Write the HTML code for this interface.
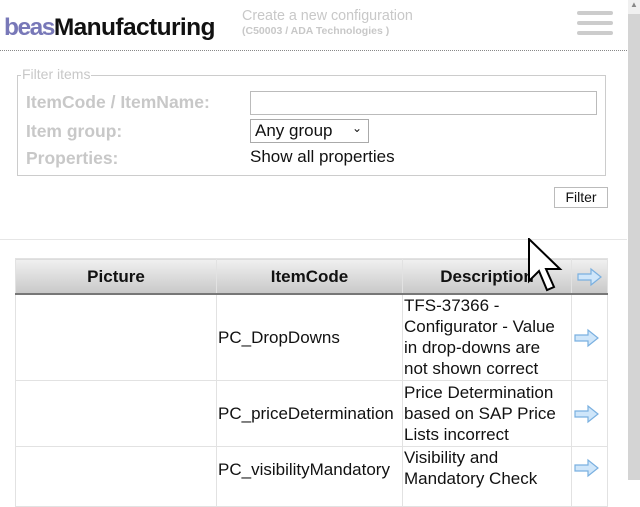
<!DOCTYPE html>
<html><head><style>
body{margin:0;width:640px;height:480px;overflow:hidden;background:#fff;font-family:"Liberation Sans",sans-serif;position:relative}
.a{position:absolute}
.lbl{color:#c8c8c8;font-weight:bold;font-size:17.5px}
table{position:absolute;left:15px;top:258px;border-collapse:collapse;font-size:17px;color:#111;table-layout:fixed;width:592px}
td,th{border:1px solid #e2e2e2;padding:0 1px;line-height:21px;white-space:nowrap;overflow:hidden}
th{height:34px;background:linear-gradient(#f0f0f0,#c8c8c8);border-bottom:2px solid #777;font-weight:bold}
svg{vertical-align:middle}
</style></head><body>
<div class="a" style="left:4px;top:14px;font-size:24.5px;font-weight:bold;letter-spacing:-1.5px"><span style="color:#7878b8">beas</span><span style="color:#111;letter-spacing:-0.6px">Manufacturing</span></div>
<div class="a" style="left:242px;top:8px;color:#c8c8c8;font-size:14.3px">Create a new configuration</div>
<div class="a" style="left:242px;top:25px;color:#c8c8c8;font-size:10.5px;font-weight:bold">(C50003 / ADA Technologies )</div>
<div class="a" style="left:577px;top:11px;width:36px;height:4px;background:#ccc;border-radius:2px"></div>
<div class="a" style="left:577px;top:21px;width:36px;height:4px;background:#ccc;border-radius:2px"></div>
<div class="a" style="left:577px;top:31px;width:36px;height:4px;background:#ccc;border-radius:2px"></div>
<div class="a" style="left:0;top:50px;width:627px;border-top:1px dotted #888"></div>
<div class="a" style="left:17px;top:75px;width:587px;height:99px;border:1px solid #ccc"></div>
<div class="a" style="left:21px;top:66px;background:#fff;color:#c8c8c8;font-size:14px;padding:0 1px">Filter items</div>
<div class="a lbl" style="left:26px;top:92px">ItemCode / ItemName:</div>
<div class="a lbl" style="left:26px;top:121px">Item group:</div>
<div class="a lbl" style="left:26px;top:148px">Properties:</div>
<div class="a" style="left:250px;top:91px;width:345px;height:22px;border:1px solid #bbb"></div>
<div class="a" style="left:250px;top:119px;width:117px;height:22px;border:1px solid #aaa;font-size:17px;line-height:22px;color:#111"><span style="margin-left:4px">Any group</span><span style="position:absolute;right:6px;top:-3px;font-size:12px">&#8964;</span></div>
<div class="a" style="left:250px;top:147px;font-size:17px;color:#111">Show all properties</div>
<div class="a" style="left:554px;top:187px;width:52px;height:19px;border:1px solid #bbb;font-size:14px;text-align:center;line-height:19px;color:#111">Filter</div>
<div class="a" style="left:0;top:239px;width:627px;border-top:1px solid #e6e6e6"></div>
<table>
<colgroup><col style="width:201px"><col style="width:186px"><col style="width:169px"><col style="width:36px"></colgroup>
<tr><th>Picture</th><th>ItemCode</th><th>Description</th><th><svg width="28" height="20" viewBox="0 0 28 20"><path d="M2 7h13V2l10 8-10 8v-5H2z" fill="#cfe6fa" stroke="#7ab0e0" stroke-width="1.2"/></svg></th></tr>
<tr style="height:86px"><td></td><td>PC_DropDowns</td><td>TFS-37366 -<br>Configurator - Value<br>in drop-downs are<br>not shown correct</td><td><svg width="28" height="20" viewBox="0 0 28 20"><path d="M2 7h13V2l10 8-10 8v-5H2z" fill="#cfe6fa" stroke="#7ab0e0" stroke-width="1.2"/></svg></td></tr>
<tr style="height:66px"><td></td><td>PC_priceDetermination</td><td>Price Determination<br>based on SAP Price<br>Lists incorrect</td><td><svg width="28" height="20" viewBox="0 0 28 20"><path d="M2 7h13V2l10 8-10 8v-5H2z" fill="#cfe6fa" stroke="#7ab0e0" stroke-width="1.2"/></svg></td></tr>
<tr style="height:60px;vertical-align:top"><td></td><td style="padding-top:12px">PC_visibilityMandatory</td><td>Visibility and<br>Mandatory Check</td><td style="padding-top:10px"><svg width="28" height="20" viewBox="0 0 28 20"><path d="M2 7h13V2l10 8-10 8v-5H2z" fill="#cfe6fa" stroke="#7ab0e0" stroke-width="1.2"/></svg></td></tr>
</table>
<div class="a" style="left:628px;top:0;width:12px;height:480px;background:#d4d4d4"></div>
<div class="a" style="left:628px;top:0;width:12px;height:14px;background:#f0f0f0;font-size:8px;color:#888;text-align:center">&#9650;</div>
<svg class="a" style="left:528px;top:238px" width="40" height="60" viewBox="0 0 40 60"><path d="M1 1v42l10-10 8 19 7-3-8-18h14z" fill="#fff" stroke="#000" stroke-width="2"/></svg>
</body></html>
